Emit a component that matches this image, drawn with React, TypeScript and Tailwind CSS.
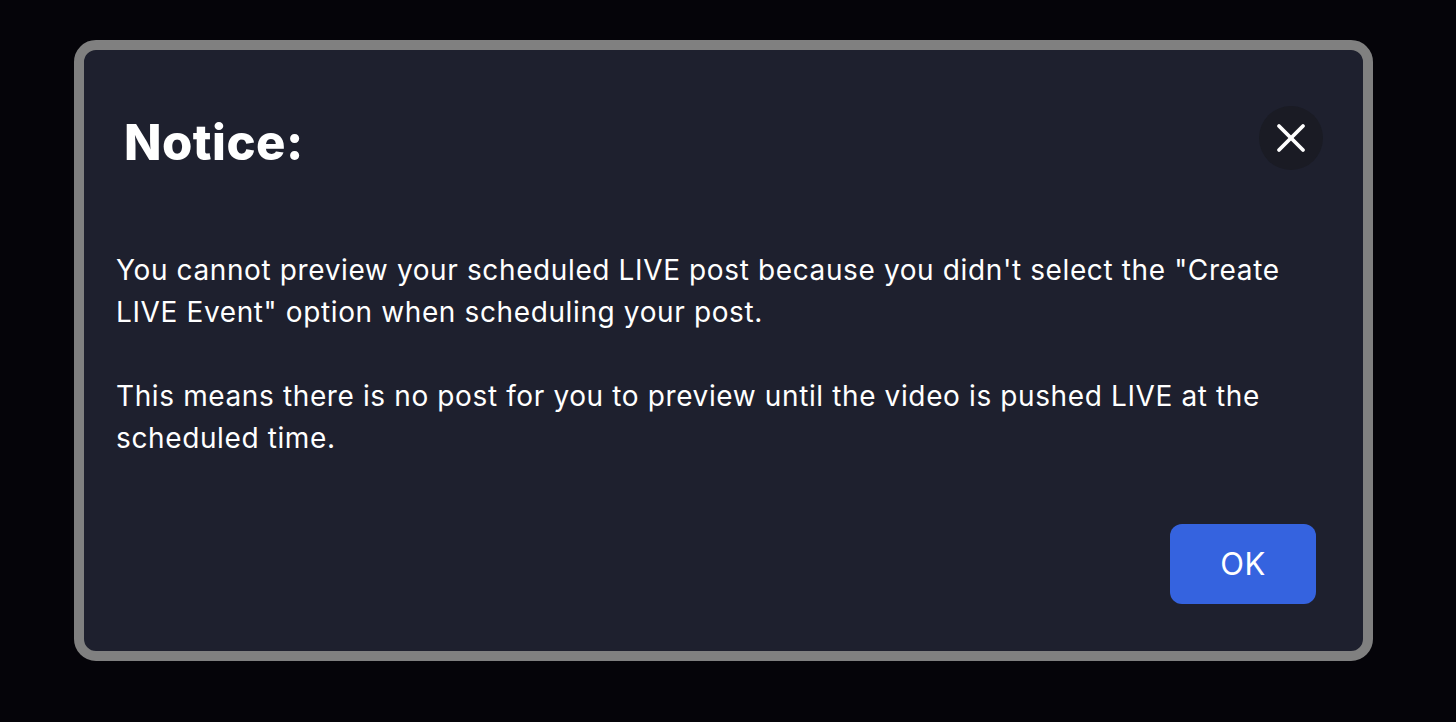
import { X } from "lucide-react";

export default function App() {
  return (
    <div
      className="w-full h-[722px] bg-[#050409] pt-[40px] pl-[74px]"
      style={{ fontFamily: "Inter, 'Noto Sans', sans-serif" }}
    >
      <div className="w-[1299px] h-[621px] border-[10px] border-[#808080] rounded-[22px] bg-[#1e202e] flex flex-col text-white">
        <div className="flex items-start justify-between pt-[56px] pl-[40px] pr-[40px]">
          <h2 className="mt-[5px] text-[49px] leading-[64px] font-extrabold tracking-[0.5px]">Notice:</h2>
          <button className="w-16 h-16 rounded-full bg-[#1a1b24] flex items-center justify-center">
            <X size={48} strokeWidth={1.9} />
          </button>
        </div>

        <div className="mt-[74px] pl-[32px] pr-[40px] text-[28px] leading-[42px] tracking-[0.62px]">
          <p>
            You cannot preview your scheduled LIVE post because you didn't select the "Create LIVE Event" option
            when scheduling your post.
          </p>
          <p className="mt-[42px]">
            This means there is no post for you to preview until the video is pushed LIVE at the scheduled time.
          </p>
        </div>

        <div className="mt-auto flex justify-end pr-[47px] pb-[47px]">
          <button className="w-[146px] h-[80px] rounded-[12px] bg-[#3563df] text-[31px] tracking-[0.5px] text-white">
            OK
          </button>
        </div>
      </div>
    </div>
  );
}
